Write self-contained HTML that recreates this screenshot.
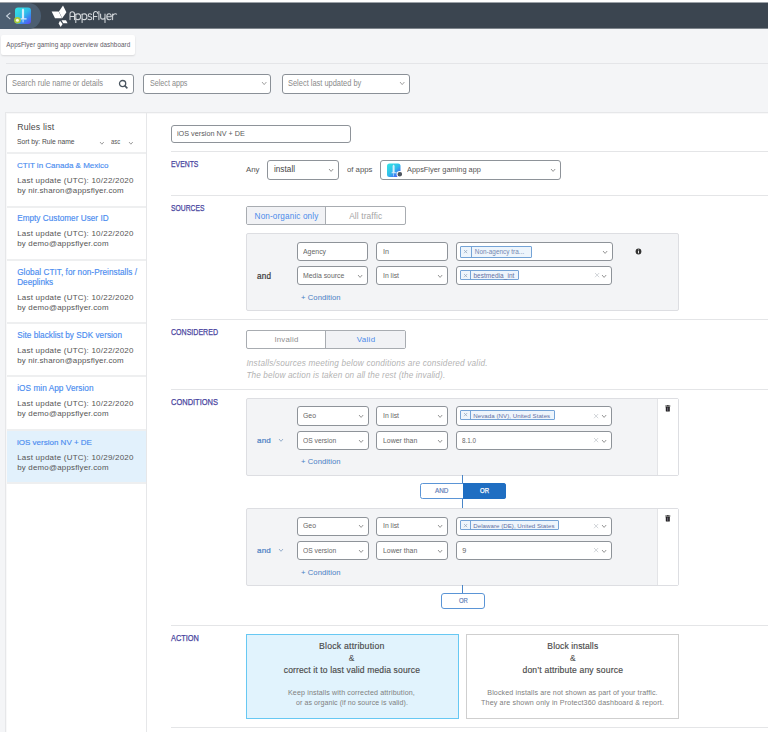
<!DOCTYPE html>
<html><head><meta charset="utf-8"><style>
html,body{margin:0;padding:0;}
body{width:768px;height:732px;overflow:hidden;position:relative;background:#f4f5f7;font-family:"Liberation Sans", sans-serif;}
.a{position:absolute;}
.t{position:absolute;white-space:pre;font-family:"Liberation Sans", sans-serif;}
</style></head><body>

<div class="a" style="left:0px;top:0px;width:768px;height:2px;background:#ffffff;"></div>
<div class="a" style="left:0px;top:2px;width:768px;height:1px;background:#9ca2a8;"></div>
<div class="a" style="left:0px;top:3px;width:768px;height:25px;background:#3b4550;"></div>
<div class="a" style="left:0px;top:28px;width:768px;height:1px;background:#7d848b;"></div>
<div class="a" style="left:0px;top:3px;width:41px;height:25.5px;background:#4c5e71;border-radius:0 12.75px 12.75px 0;"></div>
<svg class="a" style="left:5px;top:12px" width="7" height="8"><path d="M5.3 0.8 L1.6 4 L5.3 7.2" fill="none" stroke="#c9d3de" stroke-width="1.1"/></svg>
<svg class="a" style="left:13px;top:7px" width="20" height="18" viewBox="0 0 20 18">
<defs><linearGradient id="gi" x1="0.15" y1="0.1" x2="0.95" y2="1"><stop offset="0" stop-color="#33dce4"/><stop offset="0.42" stop-color="#30c0ea"/><stop offset="0.7" stop-color="#3a86f2"/><stop offset="1" stop-color="#5f48f0"/></linearGradient></defs>
<rect x="2" y="0.5" width="16" height="16.5" rx="3" fill="url(#gi)"/>
<path d="M10 1.2 L11.1 2.8 L11.1 11.3 L13.6 11.3 L13.6 12.4 L7.6 12.4 L7.6 11.3 L8.9 11.3 L8.9 2.8 Z" fill="#f2f6ff" fill-opacity="0.85"/>
<rect x="9.6" y="12.6" width="0.9" height="2.8" fill="#dfeaff"/>
<circle cx="4.4" cy="13.3" r="3.3" fill="#a6c83a"/>
<circle cx="4.4" cy="13.3" r="1.5" fill="#f5f9e8"/>
</svg>
<svg class="a" style="left:50px;top:5px" width="20" height="22" viewBox="0 0 20 22">
<polygon points="1.6,6.6 8.6,6.6 12,13.2 5,13.2" fill="#fff"/>
<polygon points="13,0.6 16.4,7.3 12.2,13.3 8.9,6.6" fill="#fff"/>
<polygon points="11.5,15.2 16,15.2 17.6,18.3 13.2,18.3" fill="#fff"/>
<polygon points="10,15.7 12.6,19 10.7,22 8.6,18.6" fill="#fff"/>
</svg>
<svg class="a" style="left:0;top:0" width="130" height="30"><g fill="none" stroke="#d3d7db" stroke-width="1.05" stroke-linecap="round">
<path d="M70 19.6 V14 A2.25 2.25 0 0 1 74.5 14 V19.6 M70 16.4 H74.5"/>
<path d="M75.8 13.9 V22.4"/><path d="M75.8 14.6 Q76.6 13.8 78.2 13.8 Q80.6 13.9 80.6 16.7 Q80.6 19.6 78.2 19.6 Q76.6 19.6 75.8 18.8"/>
<path d="M82.1 13.9 V22.4"/><path d="M82.1 14.6 Q82.9 13.8 84.5 13.8 Q86.9 13.9 86.9 16.7 Q86.9 19.6 84.5 19.6 Q82.9 19.6 82.1 18.8"/>
<path d="M91.6 14.4 Q90.9 13.8 89.8 13.8 Q88.2 13.8 88.2 15.2 Q88.2 16.5 89.9 16.7 Q91.8 16.9 91.8 18.3 Q91.8 19.7 89.9 19.7 Q88.6 19.7 88 19.1"/>
<path d="M93.5 19.6 V13.9 A2.2 2.2 0 0 1 97.9 13.6 M93.5 16.4 H96.9"/>
<path d="M98.9 11.6 V19.6"/>
<path d="M100.6 13.9 V16.9 A2.2 2.2 0 0 0 105 16.9 M105 13.9 V22.4"/>
<path d="M106.9 16.8 H111.3 Q111.3 13.8 109.1 13.8 Q106.8 13.8 106.8 16.7 Q106.8 19.7 109.2 19.7 Q110.5 19.7 111.1 19"/>
<path d="M112.6 19.6 V13.9 M112.6 15.9 Q113.3 13.8 115.4 13.8 Q116.2 13.8 116.6 14.1"/>
</g></svg>
<div class="a" style="left:1px;top:35px;width:134px;height:20px;background:#fff;border-radius:2px;box-shadow:0 1px 2px rgba(0,0,0,0.12);"></div>
<div class="t" style="left:6.30px;top:42.00px;font-size:6.300px;line-height:6.300px;color:#5e5a66;letter-spacing:0.075px;">AppsFlyer gaming app overview dashboard</div>
<div class="a" style="left:6px;top:63px;width:762px;height:1px;background:#e4e5e8;"></div>
<div class="a" style="left:6px;top:74px;width:128px;height:20px;background:#fff;border:1px solid #8a9097;border-radius:3px;box-sizing:border-box;"></div>
<div class="t" style="left:11.70px;top:80.00px;font-size:8.230px;line-height:8.230px;color:#8a8a8a;transform:scaleX(0.9061);transform-origin:0 0;">Search rule name or details</div>
<svg class="a" style="left:118px;top:79px" width="11" height="11"><circle cx="4.6" cy="4.6" r="3.1" fill="none" stroke="#4a5560" stroke-width="1.3"/><path d="M6.9 6.9 L9.4 9.4" stroke="#4a5560" stroke-width="1.5"/></svg>
<div class="a" style="left:143px;top:74px;width:128px;height:20px;background:#fff;border:1px solid #8a9097;border-radius:3px;box-sizing:border-box;"></div>
<div class="t" style="left:150.30px;top:80.00px;font-size:8.230px;line-height:8.230px;color:#8a8a8a;transform:scaleX(0.8719);transform-origin:0 0;">Select apps</div>
<svg class="a" style="left:260.8px;top:81.0px" width="6.4" height="4.6"><path d="M1 1 L3.2 3.6 L5.4 1" fill="none" stroke="#8a8a8a" stroke-width="0.8"/></svg>
<div class="a" style="left:282px;top:74px;width:128px;height:20px;background:#fff;border:1px solid #8a9097;border-radius:3px;box-sizing:border-box;"></div>
<div class="t" style="left:288.20px;top:80.00px;font-size:8.230px;line-height:8.230px;color:#8a8a8a;transform:scaleX(0.9063);transform-origin:0 0;">Select last updated by</div>
<svg class="a" style="left:399.3px;top:81.0px" width="6.4" height="4.6"><path d="M1 1 L3.2 3.6 L5.4 1" fill="none" stroke="#8a8a8a" stroke-width="0.8"/></svg>
<div class="a" style="left:5px;top:112px;width:763px;height:620px;background:#fff;border-top:1px solid #e6e7e9;border-left:1px solid #e6e7e9;box-sizing:border-box;"></div>
<div class="a" style="left:6px;top:113px;width:762px;height:1px;background:#f8f8f9;"></div>
<div class="a" style="left:6px;top:113px;width:1px;height:619px;background:#f8f8f9;"></div>
<div class="a" style="left:146px;top:113px;width:1px;height:619px;background:#e6e7e9;"></div>
<div class="t" style="left:17.20px;top:123.00px;font-size:8.744px;line-height:8.744px;color:#4a4a4a;letter-spacing:0.170px;">Rules list</div>
<div class="t" style="left:17.20px;top:139.00px;font-size:6.859px;line-height:6.859px;color:#4a4a4a;transform:scaleX(0.9811);transform-origin:0 0;">Sort by: Rule name</div>
<svg class="a" style="left:98.6px;top:140.5px" width="5.8" height="4.2"><path d="M1 1 L2.9 3.2 L4.8 1" fill="none" stroke="#777" stroke-width="0.7"/></svg>
<div class="t" style="left:111.40px;top:139.00px;font-size:6.722px;line-height:6.722px;color:#555;transform:scaleX(0.8699);transform-origin:0 0;">asc</div>
<svg class="a" style="left:127.9px;top:140.5px" width="5.8" height="4.2"><path d="M1 1 L2.9 3.2 L4.8 1" fill="none" stroke="#777" stroke-width="0.7"/></svg>
<div class="t" style="left:17.20px;top:162.00px;font-size:8.093px;line-height:8.093px;color:#4a8cf0;transform:scaleX(0.9912);transform-origin:0 0;-webkit-text-stroke:0.15px #4a8cf0;">CTIT in Canada &amp; Mexico</div>
<div class="t" style="left:17.20px;top:177.00px;font-size:7.990px;line-height:7.990px;color:#555;letter-spacing:0.219px;">Last update (UTC): 10/22/2020</div>
<div class="t" style="left:17.20px;top:187.00px;font-size:7.901px;line-height:7.901px;color:#555;letter-spacing:0.177px;">by nir.sharon@appsflyer.com</div>
<div class="t" style="left:17.20px;top:215.00px;font-size:8.163px;line-height:8.163px;color:#4a8cf0;letter-spacing:0.037px;-webkit-text-stroke:0.15px #4a8cf0;">Empty Customer User ID</div>
<div class="t" style="left:17.20px;top:230.00px;font-size:7.990px;line-height:7.990px;color:#555;letter-spacing:0.219px;">Last update (UTC): 10/22/2020</div>
<div class="t" style="left:17.20px;top:240.00px;font-size:7.924px;line-height:7.924px;color:#555;letter-spacing:0.209px;">by demo@appsflyer.com</div>
<div class="t" style="left:17.20px;top:269.00px;font-size:8.199px;line-height:8.199px;color:#4a8cf0;letter-spacing:0.046px;-webkit-text-stroke:0.15px #4a8cf0;">Global CTIT, for non-Preinstalls /</div>
<div class="t" style="left:17.20px;top:279.00px;font-size:8.200px;line-height:8.200px;color:#4a8cf0;-webkit-text-stroke:0.15px #4a8cf0;">Deeplinks</div>
<div class="t" style="left:17.20px;top:294.00px;font-size:7.990px;line-height:7.990px;color:#555;letter-spacing:0.219px;">Last update (UTC): 10/22/2020</div>
<div class="t" style="left:17.20px;top:304.00px;font-size:7.924px;line-height:7.924px;color:#555;letter-spacing:0.209px;">by demo@appsflyer.com</div>
<div class="t" style="left:17.20px;top:332.00px;font-size:8.168px;line-height:8.168px;color:#4a8cf0;letter-spacing:0.034px;-webkit-text-stroke:0.15px #4a8cf0;">Site blacklist by SDK version</div>
<div class="t" style="left:17.20px;top:347.00px;font-size:7.990px;line-height:7.990px;color:#555;letter-spacing:0.219px;">Last update (UTC): 10/22/2020</div>
<div class="t" style="left:17.20px;top:357.00px;font-size:7.901px;line-height:7.901px;color:#555;letter-spacing:0.177px;">by nir.sharon@appsflyer.com</div>
<div class="t" style="left:17.20px;top:385.00px;font-size:8.217px;line-height:8.217px;color:#4a8cf0;letter-spacing:0.063px;-webkit-text-stroke:0.15px #4a8cf0;">iOS min App Version</div>
<div class="t" style="left:17.20px;top:400.00px;font-size:7.990px;line-height:7.990px;color:#555;letter-spacing:0.219px;">Last update (UTC): 10/22/2020</div>
<div class="t" style="left:17.20px;top:410.00px;font-size:7.924px;line-height:7.924px;color:#555;letter-spacing:0.209px;">by demo@appsflyer.com</div>
<div class="a" style="left:7px;top:430.4px;width:139px;height:52.700000000000045px;background:#e2f1fc;"></div>
<div class="t" style="left:17.20px;top:439.00px;font-size:8.093px;line-height:8.093px;color:#4a8cf0;transform:scaleX(0.9909);transform-origin:0 0;-webkit-text-stroke:0.15px #4a8cf0;">iOS version NV + DE</div>
<div class="t" style="left:17.20px;top:454.00px;font-size:7.990px;line-height:7.990px;color:#555;letter-spacing:0.219px;">Last update (UTC): 10/29/2020</div>
<div class="t" style="left:17.20px;top:464.00px;font-size:7.924px;line-height:7.924px;color:#555;letter-spacing:0.209px;">by demo@appsflyer.com</div>
<div class="a" style="left:7px;top:152.3px;width:139px;height:2px;background:#eeeff0;"></div>
<div class="a" style="left:7px;top:205.5px;width:139px;height:2px;background:#eeeff0;"></div>
<div class="a" style="left:7px;top:259.4px;width:139px;height:2px;background:#eeeff0;"></div>
<div class="a" style="left:7px;top:322.3px;width:139px;height:2px;background:#eeeff0;"></div>
<div class="a" style="left:7px;top:375px;width:139px;height:2px;background:#eeeff0;"></div>
<div class="a" style="left:7px;top:429.4px;width:139px;height:2px;background:#eeeff0;"></div>
<div class="a" style="left:7px;top:482.1px;width:139px;height:2px;background:#eeeff0;"></div>
<div class="a" style="left:171px;top:124.5px;width:180px;height:18.5px;background:#fff;border:1px solid #8e9399;border-radius:3px;box-sizing:border-box;"></div>
<div class="t" style="left:177.00px;top:130.00px;font-size:8.093px;line-height:8.093px;color:#5a5a5a;transform:scaleX(0.8972);transform-origin:0 0;">iOS version NV + DE</div>
<div class="a" style="left:171px;top:151.0px;width:597px;height:1px;background:#e4e5e7;"></div>
<div class="t" style="left:171.00px;top:160.00px;font-size:8.505px;line-height:8.505px;color:#4a46a0;transform:scaleX(0.8052);transform-origin:0 0;-webkit-text-stroke:0.25px #4a46a0;">EVENTS</div>
<div class="t" style="left:246.00px;top:166.00px;font-size:7.826px;line-height:7.826px;color:#555;letter-spacing:0.006px;">Any</div>
<div class="a" style="left:267px;top:160px;width:72px;height:19.6px;background:#fff;border:1px solid #8e9399;border-radius:3px;box-sizing:border-box;"></div>
<svg class="a" style="left:327.9px;top:167.90000000000003px" width="6.2" height="4.4"><path d="M1 1 L3.1 3.4 L5.2 1" fill="none" stroke="#7a7a7a" stroke-width="0.8"/></svg>
<div class="t" style="left:273.90px;top:166.00px;font-size:8.193px;line-height:8.193px;color:#444;letter-spacing:0.042px;">install</div>
<div class="t" style="left:347.00px;top:166.00px;font-size:7.819px;line-height:7.819px;color:#555;transform:scaleX(0.9942);transform-origin:0 0;">of apps</div>
<div class="a" style="left:380px;top:160px;width:181px;height:19.6px;background:#fff;border:1px solid #8e9399;border-radius:3px;box-sizing:border-box;"></div>
<svg class="a" style="left:549.9px;top:167.90000000000003px" width="6.2" height="4.4"><path d="M1 1 L3.1 3.4 L5.2 1" fill="none" stroke="#7a7a7a" stroke-width="0.8"/></svg>
<svg class="a" style="left:385.5px;top:162.5px" width="16" height="15" viewBox="0 0 16 15">
<defs><linearGradient id="gi2" x1="0.15" y1="0.1" x2="0.95" y2="1"><stop offset="0" stop-color="#33dce4"/><stop offset="0.42" stop-color="#30c0ea"/><stop offset="0.7" stop-color="#3a86f2"/><stop offset="1" stop-color="#5f48f0"/></linearGradient></defs>
<rect x="1" y="0.5" width="13.5" height="13.5" rx="2.5" fill="url(#gi2)"/>
<path d="M7.6 1.5 L8.6 2.8 L8.6 9.3 L10.6 9.3 L10.6 10.3 L5.6 10.3 L5.6 9.3 L6.6 9.3 L6.6 2.8 Z" fill="#f2f6ff" fill-opacity="0.85"/>
<rect x="7.2" y="10.3" width="0.8" height="3" fill="#e8f0ff" fill-opacity="0.7"/>
<circle cx="13.8" cy="11.2" r="3.2" fill="#fff"/><circle cx="13.8" cy="11.2" r="2.3" fill="#4e5660"/>
</svg>
<div class="t" style="left:406.50px;top:166.00px;font-size:7.682px;line-height:7.682px;color:#555;transform:scaleX(0.9628);transform-origin:0 0;">AppsFlyer gaming app</div>
<div class="a" style="left:171px;top:195.0px;width:597px;height:1px;background:#e4e5e7;"></div>
<div class="t" style="left:171.00px;top:204.00px;font-size:8.505px;line-height:8.505px;color:#4a46a0;transform:scaleX(0.7941);transform-origin:0 0;-webkit-text-stroke:0.25px #4a46a0;">SOURCES</div>
<div class="a" style="left:246px;top:206.3px;width:159.5px;height:19px;background:#fff;border:1px solid #a8acb1;border-radius:2px;box-sizing:border-box;"></div>
<div class="a" style="left:247px;top:207.3px;width:78px;height:17px;background:#f1f2f5;"></div>
<div class="a" style="left:325px;top:206.3px;width:1px;height:19px;background:#a8acb1;"></div>
<div class="t" style="left:254.60px;top:213.00px;font-size:8.198px;line-height:8.198px;color:#4b8bea;letter-spacing:0.122px;">Non-organic only</div>
<div class="t" style="left:349.20px;top:212.00px;font-size:8.315px;line-height:8.315px;color:#a3a3a3;letter-spacing:0.137px;">All traffic</div>
<div class="a" style="left:246px;top:233.3px;width:433.3px;height:78px;background:#f3f4f6;border:1px solid #dddee2;border-radius:2px;box-sizing:border-box;"></div>
<div class="a" style="left:296.8px;top:242px;width:71.7px;height:18.8px;background:#fff;border:1px solid #8e9399;border-radius:3px;box-sizing:border-box;"></div>
<div class="t" style="left:302.90px;top:249.00px;font-size:7.133px;line-height:7.133px;color:#666666;transform:scaleX(0.9709);transform-origin:0 0;">Agency</div>
<div class="a" style="left:376.3px;top:242px;width:71.6px;height:18.8px;background:#fff;border:1px solid #8e9399;border-radius:3px;box-sizing:border-box;"></div>
<div class="t" style="left:382.60px;top:248.00px;font-size:7.270px;line-height:7.270px;color:#666666;transform:scaleX(0.9895);transform-origin:0 0;">In</div>
<div class="a" style="left:456.3px;top:242.2px;width:156.9px;height:18.9px;background:#fff;border:1px solid #8e9399;border-radius:3px;box-sizing:border-box;"></div>
<svg class="a" style="left:602.1px;top:249.75px" width="6.2" height="4.4"><path d="M1 1 L3.1 3.4 L5.2 1" fill="none" stroke="#7a7a7a" stroke-width="0.8"/></svg>
<div class="a" style="left:459.7px;top:245.7px;width:72.1px;height:12px;background:#eef5fc;border:1px solid #74a3d6;border-radius:1px;box-sizing:border-box;"></div>
<div class="a" style="left:471px;top:245.7px;width:1px;height:12px;background:#74a3d6;"></div>
<svg class="a" style="left:463.25px;top:249.1px" width="5.2" height="5.2"><path d="M1 1 L4.2 4.2 M4.2 1 L1 4.2" fill="none" stroke="#8ea2b8" stroke-width="0.7"/></svg>
<div class="t" style="left:474.80px;top:249.00px;font-size:6.382px;line-height:6.382px;color:#7488b0;letter-spacing:0.034px;">Non-agency tra...</div>
<svg class="a" style="left:635px;top:248px" width="7" height="7"><circle cx="3.5" cy="3.5" r="2.9" fill="#333"/><rect x="3.05" y="3" width="0.9" height="2.3" fill="#fff"/><rect x="3.05" y="1.6" width="0.9" height="0.8" fill="#fff"/></svg>
<div class="t" style="left:257.00px;top:273.00px;font-size:8.173px;line-height:8.173px;color:#3a3a3a;letter-spacing:0.181px;-webkit-text-stroke:0.2px #3a3a3a;">and</div>
<div class="a" style="left:296.8px;top:266.4px;width:71.7px;height:18.6px;background:#fff;border:1px solid #8e9399;border-radius:3px;box-sizing:border-box;"></div>
<svg class="a" style="left:357.4px;top:273.8px" width="6.2" height="4.4"><path d="M1 1 L3.1 3.4 L5.2 1" fill="none" stroke="#7a7a7a" stroke-width="0.8"/></svg>
<div class="t" style="left:302.90px;top:272.00px;font-size:7.407px;line-height:7.407px;color:#666666;transform:scaleX(0.9310);transform-origin:0 0;">Media source</div>
<div class="a" style="left:376.3px;top:266.4px;width:71.6px;height:18.6px;background:#fff;border:1px solid #8e9399;border-radius:3px;box-sizing:border-box;"></div>
<svg class="a" style="left:436.79999999999995px;top:273.8px" width="6.2" height="4.4"><path d="M1 1 L3.1 3.4 L5.2 1" fill="none" stroke="#7a7a7a" stroke-width="0.8"/></svg>
<div class="t" style="left:382.60px;top:272.00px;font-size:7.270px;line-height:7.270px;color:#666666;transform:scaleX(0.9429);transform-origin:0 0;">In list</div>
<div class="a" style="left:456.3px;top:266.4px;width:155.9px;height:18.6px;background:#fff;border:1px solid #8e9399;border-radius:3px;box-sizing:border-box;"></div>
<svg class="a" style="left:601.1px;top:273.8px" width="6.2" height="4.4"><path d="M1 1 L3.1 3.4 L5.2 1" fill="none" stroke="#7a7a7a" stroke-width="0.8"/></svg>
<svg class="a" style="left:593.5px;top:272.29999999999995px" width="6.2" height="6.2"><path d="M1 1 L5.2 5.2 M5.2 1 L1 5.2" fill="none" stroke="#c3c7cc" stroke-width="0.75"/></svg>
<div class="a" style="left:459.6px;top:270.2px;width:59px;height:10px;background:#eef5fc;border:1px solid #74a3d6;border-radius:1px;box-sizing:border-box;"></div>
<div class="a" style="left:470.4px;top:270.2px;width:1px;height:10px;background:#74a3d6;"></div>
<svg class="a" style="left:462.9px;top:272.59999999999997px" width="5.2" height="5.2"><path d="M1 1 L4.2 4.2 M4.2 1 L1 4.2" fill="none" stroke="#8ea2b8" stroke-width="0.7"/></svg>
<div class="t" style="left:473.40px;top:273.00px;font-size:6.456px;line-height:6.456px;color:#5f70a3;letter-spacing:0.076px;">bestmedia_int</div>
<div class="t" style="left:301.00px;top:294.00px;font-size:7.665px;line-height:7.665px;color:#4a80c4;letter-spacing:0.061px;">+ Condition</div>
<div class="a" style="left:171px;top:318.9px;width:597px;height:1px;background:#e4e5e7;"></div>
<div class="t" style="left:171.00px;top:328.00px;font-size:8.505px;line-height:8.505px;color:#4a46a0;transform:scaleX(0.8288);transform-origin:0 0;-webkit-text-stroke:0.25px #4a46a0;">CONSIDERED</div>
<div class="a" style="left:246px;top:330.4px;width:159.8px;height:18.3px;background:#fff;border:1px solid #a8acb1;border-radius:2px;box-sizing:border-box;"></div>
<div class="a" style="left:325.6px;top:331.4px;width:79.2px;height:16.3px;background:#f1f2f5;"></div>
<div class="a" style="left:325.1px;top:330.4px;width:1px;height:18.3px;background:#a8acb1;"></div>
<div class="t" style="left:274.40px;top:336.00px;font-size:7.838px;line-height:7.838px;color:#8f8f8f;letter-spacing:0.207px;">Invalid</div>
<div class="t" style="left:356.80px;top:336.00px;font-size:7.960px;line-height:7.960px;color:#4b8bea;letter-spacing:0.297px;">Valid</div>
<div class="t" style="left:246.40px;top:360.00px;font-size:8.239px;line-height:8.239px;color:#b3b3b3;letter-spacing:0.189px;font-style:italic;">Installs/sources meeting below conditions are considered valid.</div>
<div class="t" style="left:246.40px;top:372.00px;font-size:8.182px;line-height:8.182px;color:#b3b3b3;letter-spacing:0.154px;font-style:italic;">The below action is taken on all the rest (the invalid).</div>
<div class="a" style="left:171px;top:388.8px;width:597px;height:1px;background:#e4e5e7;"></div>
<div class="t" style="left:171.00px;top:398.00px;font-size:8.505px;line-height:8.505px;color:#4a46a0;transform:scaleX(0.8803);transform-origin:0 0;-webkit-text-stroke:0.25px #4a46a0;">CONDITIONS</div>
<div class="a" style="left:246px;top:398px;width:433px;height:77.5px;background:#f3f4f6;border:1px solid #dddee2;border-radius:2px;box-sizing:border-box;"></div>
<div class="a" style="left:657px;top:399px;width:21px;height:75.5px;background:#fff;border-left:1px solid #e3e4e7;box-sizing:border-box;"></div>
<svg class="a" style="left:664px;top:405px" width="8" height="8"><rect x="1.3" y="0.5" width="5" height="1" fill="#222"/><rect x="3" y="0" width="1.6" height="0.7" fill="#222"/><rect x="1.8" y="1.7" width="4" height="4.9" rx="0.5" fill="#222"/><rect x="3.45" y="2.5" width="0.7" height="3.3" fill="#9a8fb0"/></svg>
<div class="a" style="left:297px;top:406.3px;width:71.6px;height:19.5px;background:#fff;border:1px solid #8e9399;border-radius:3px;box-sizing:border-box;"></div>
<svg class="a" style="left:357.5px;top:414.15000000000003px" width="6.2" height="4.4"><path d="M1 1 L3.1 3.4 L5.2 1" fill="none" stroke="#7a7a7a" stroke-width="0.8"/></svg>
<div class="t" style="left:302.80px;top:412.00px;font-size:7.270px;line-height:7.270px;color:#666666;transform:scaleX(0.9460);transform-origin:0 0;">Geo</div>
<div class="a" style="left:376.3px;top:406.3px;width:71.5px;height:19.5px;background:#fff;border:1px solid #8e9399;border-radius:3px;box-sizing:border-box;"></div>
<svg class="a" style="left:436.7px;top:414.15000000000003px" width="6.2" height="4.4"><path d="M1 1 L3.1 3.4 L5.2 1" fill="none" stroke="#7a7a7a" stroke-width="0.8"/></svg>
<div class="t" style="left:382.50px;top:412.00px;font-size:7.270px;line-height:7.270px;color:#666666;transform:scaleX(0.9429);transform-origin:0 0;">In list</div>
<div class="a" style="left:456px;top:406.3px;width:155.7px;height:19.5px;background:#fff;border:1px solid #8e9399;border-radius:3px;box-sizing:border-box;"></div>
<svg class="a" style="left:600.6px;top:414.15000000000003px" width="6.2" height="4.4"><path d="M1 1 L3.1 3.4 L5.2 1" fill="none" stroke="#7a7a7a" stroke-width="0.8"/></svg>
<svg class="a" style="left:593.0px;top:412.65px" width="6.2" height="6.2"><path d="M1 1 L5.2 5.2 M5.2 1 L1 5.2" fill="none" stroke="#c3c7cc" stroke-width="0.75"/></svg>
<div class="a" style="left:459.6px;top:409.7px;width:95px;height:10.4px;background:#eef5fc;border:1px solid #74a3d6;border-radius:1px;box-sizing:border-box;"></div>
<div class="a" style="left:470px;top:409.7px;width:1px;height:10.4px;background:#74a3d6;"></div>
<svg class="a" style="left:462.7px;top:412.29999999999995px" width="5.2" height="5.2"><path d="M1 1 L4.2 4.2 M4.2 1 L1 4.2" fill="none" stroke="#8ea2b8" stroke-width="0.7"/></svg>
<div class="t" style="left:473.30px;top:413.00px;font-size:6.138px;line-height:6.138px;color:#5f70a3;letter-spacing:0.051px;">Nevada (NV), United States</div>
<div class="t" style="left:257.00px;top:437.00px;font-size:8.045px;line-height:8.045px;color:#4a80c4;letter-spacing:0.188px;-webkit-text-stroke:0.2px #4a80c4;">and</div>
<svg class="a" style="left:278.0px;top:438.05000000000007px" width="6" height="4.3"><path d="M1 1 L3.0 3.3 L5 1" fill="none" stroke="#7d9cc0" stroke-width="0.8"/></svg>
<div class="a" style="left:297px;top:431.1px;width:71.6px;height:18.8px;background:#fff;border:1px solid #8e9399;border-radius:3px;box-sizing:border-box;"></div>
<svg class="a" style="left:357.5px;top:438.6px" width="6.2" height="4.4"><path d="M1 1 L3.1 3.4 L5.2 1" fill="none" stroke="#7a7a7a" stroke-width="0.8"/></svg>
<div class="t" style="left:302.80px;top:437.00px;font-size:7.270px;line-height:7.270px;color:#666666;transform:scaleX(0.9232);transform-origin:0 0;">OS version</div>
<div class="a" style="left:376.3px;top:431.1px;width:71.5px;height:18.8px;background:#fff;border:1px solid #8e9399;border-radius:3px;box-sizing:border-box;"></div>
<svg class="a" style="left:436.7px;top:438.6px" width="6.2" height="4.4"><path d="M1 1 L3.1 3.4 L5.2 1" fill="none" stroke="#7a7a7a" stroke-width="0.8"/></svg>
<div class="t" style="left:382.50px;top:437.00px;font-size:7.270px;line-height:7.270px;color:#666666;transform:scaleX(0.9535);transform-origin:0 0;">Lower than</div>
<div class="a" style="left:456px;top:431.1px;width:155.7px;height:18.8px;background:#fff;border:1px solid #8e9399;border-radius:3px;box-sizing:border-box;"></div>
<svg class="a" style="left:600.6px;top:438.6px" width="6.2" height="4.4"><path d="M1 1 L3.1 3.4 L5.2 1" fill="none" stroke="#7a7a7a" stroke-width="0.8"/></svg>
<svg class="a" style="left:593.0px;top:437.09999999999997px" width="6.2" height="6.2"><path d="M1 1 L5.2 5.2 M5.2 1 L1 5.2" fill="none" stroke="#c3c7cc" stroke-width="0.75"/></svg>
<div class="t" style="left:462.30px;top:437.00px;font-size:7.270px;line-height:7.270px;color:#666666;transform:scaleX(0.8658);transform-origin:0 0;">8.1.0</div>
<div class="t" style="left:301.00px;top:458.00px;font-size:7.665px;line-height:7.665px;color:#4a80c4;letter-spacing:0.061px;">+ Condition</div>
<div class="a" style="left:462.2px;top:475.4px;width:1px;height:33px;background:#4a86c8;"></div>
<div class="a" style="left:420px;top:483.2px;width:85.6px;height:15.5px;background:#fff;border:1px solid #5b95d6;border-radius:2.5px;box-sizing:border-box;"></div>
<div class="a" style="left:462.6px;top:483.2px;width:43px;height:15.5px;background:#1f6ec2;border-radius:0 2.5px 2.5px 0;"></div>
<div class="t" style="left:435.00px;top:488.00px;font-size:6.859px;line-height:6.859px;color:#5f80b8;transform:scaleX(0.9253);transform-origin:0 0;-webkit-text-stroke:0.2px #5f80b8;">AND</div>
<div class="t" style="left:479.80px;top:488.00px;font-size:6.859px;line-height:6.859px;color:#ffffff;transform:scaleX(0.8748);transform-origin:0 0;-webkit-text-stroke:0.25px #ffffff;">OR</div>
<div class="a" style="left:246px;top:508.2px;width:433px;height:77.5px;background:#f3f4f6;border:1px solid #dddee2;border-radius:2px;box-sizing:border-box;"></div>
<div class="a" style="left:657px;top:509.2px;width:21px;height:75.5px;background:#fff;border-left:1px solid #e3e4e7;box-sizing:border-box;"></div>
<svg class="a" style="left:664px;top:515.2px" width="8" height="8"><rect x="1.3" y="0.5" width="5" height="1" fill="#222"/><rect x="3" y="0" width="1.6" height="0.7" fill="#222"/><rect x="1.8" y="1.7" width="4" height="4.9" rx="0.5" fill="#222"/><rect x="3.45" y="2.5" width="0.7" height="3.3" fill="#9a8fb0"/></svg>
<div class="a" style="left:297px;top:516.5px;width:71.6px;height:19.5px;background:#fff;border:1px solid #8e9399;border-radius:3px;box-sizing:border-box;"></div>
<svg class="a" style="left:357.5px;top:524.3499999999999px" width="6.2" height="4.4"><path d="M1 1 L3.1 3.4 L5.2 1" fill="none" stroke="#7a7a7a" stroke-width="0.8"/></svg>
<div class="t" style="left:302.80px;top:522.00px;font-size:7.270px;line-height:7.270px;color:#666666;transform:scaleX(0.9460);transform-origin:0 0;">Geo</div>
<div class="a" style="left:376.3px;top:516.5px;width:71.5px;height:19.5px;background:#fff;border:1px solid #8e9399;border-radius:3px;box-sizing:border-box;"></div>
<svg class="a" style="left:436.7px;top:524.3499999999999px" width="6.2" height="4.4"><path d="M1 1 L3.1 3.4 L5.2 1" fill="none" stroke="#7a7a7a" stroke-width="0.8"/></svg>
<div class="t" style="left:382.50px;top:522.00px;font-size:7.270px;line-height:7.270px;color:#666666;transform:scaleX(0.9429);transform-origin:0 0;">In list</div>
<div class="a" style="left:456px;top:516.5px;width:155.7px;height:19.5px;background:#fff;border:1px solid #8e9399;border-radius:3px;box-sizing:border-box;"></div>
<svg class="a" style="left:600.6px;top:524.3499999999999px" width="6.2" height="4.4"><path d="M1 1 L3.1 3.4 L5.2 1" fill="none" stroke="#7a7a7a" stroke-width="0.8"/></svg>
<svg class="a" style="left:593.0px;top:522.85px" width="6.2" height="6.2"><path d="M1 1 L5.2 5.2 M5.2 1 L1 5.2" fill="none" stroke="#c3c7cc" stroke-width="0.75"/></svg>
<div class="a" style="left:459.6px;top:519.9px;width:99.7px;height:10.4px;background:#eef5fc;border:1px solid #74a3d6;border-radius:1px;box-sizing:border-box;"></div>
<div class="a" style="left:470px;top:519.9px;width:1px;height:10.4px;background:#74a3d6;"></div>
<svg class="a" style="left:462.7px;top:522.5px" width="5.2" height="5.2"><path d="M1 1 L4.2 4.2 M4.2 1 L1 4.2" fill="none" stroke="#8ea2b8" stroke-width="0.7"/></svg>
<div class="t" style="left:473.30px;top:523.00px;font-size:6.117px;line-height:6.117px;color:#5f70a3;letter-spacing:0.040px;">Delaware (DE), United States</div>
<div class="t" style="left:257.00px;top:547.00px;font-size:8.045px;line-height:8.045px;color:#4a80c4;letter-spacing:0.188px;-webkit-text-stroke:0.2px #4a80c4;">and</div>
<svg class="a" style="left:278.0px;top:548.25px" width="6" height="4.3"><path d="M1 1 L3.0 3.3 L5 1" fill="none" stroke="#7d9cc0" stroke-width="0.8"/></svg>
<div class="a" style="left:297px;top:541.3px;width:71.6px;height:18.8px;background:#fff;border:1px solid #8e9399;border-radius:3px;box-sizing:border-box;"></div>
<svg class="a" style="left:357.5px;top:548.7999999999998px" width="6.2" height="4.4"><path d="M1 1 L3.1 3.4 L5.2 1" fill="none" stroke="#7a7a7a" stroke-width="0.8"/></svg>
<div class="t" style="left:302.80px;top:547.00px;font-size:7.270px;line-height:7.270px;color:#666666;transform:scaleX(0.9232);transform-origin:0 0;">OS version</div>
<div class="a" style="left:376.3px;top:541.3px;width:71.5px;height:18.8px;background:#fff;border:1px solid #8e9399;border-radius:3px;box-sizing:border-box;"></div>
<svg class="a" style="left:436.7px;top:548.7999999999998px" width="6.2" height="4.4"><path d="M1 1 L3.1 3.4 L5.2 1" fill="none" stroke="#7a7a7a" stroke-width="0.8"/></svg>
<div class="t" style="left:382.50px;top:547.00px;font-size:7.270px;line-height:7.270px;color:#666666;transform:scaleX(0.9535);transform-origin:0 0;">Lower than</div>
<div class="a" style="left:456px;top:541.3px;width:155.7px;height:18.8px;background:#fff;border:1px solid #8e9399;border-radius:3px;box-sizing:border-box;"></div>
<svg class="a" style="left:600.6px;top:548.7999999999998px" width="6.2" height="4.4"><path d="M1 1 L3.1 3.4 L5.2 1" fill="none" stroke="#7a7a7a" stroke-width="0.8"/></svg>
<svg class="a" style="left:593.0px;top:547.3px" width="6.2" height="6.2"><path d="M1 1 L5.2 5.2 M5.2 1 L1 5.2" fill="none" stroke="#c3c7cc" stroke-width="0.75"/></svg>
<div class="t" style="left:462.30px;top:547.00px;font-size:7.270px;line-height:7.270px;color:#666666;">9</div>
<div class="t" style="left:301.00px;top:569.00px;font-size:7.665px;line-height:7.665px;color:#4a80c4;letter-spacing:0.061px;">+ Condition</div>
<div class="a" style="left:462.2px;top:585.3px;width:1px;height:8.5px;background:#4a86c8;"></div>
<div class="a" style="left:441.1px;top:593.3px;width:43.7px;height:15.3px;background:#fff;border:1px solid #5b95d6;border-radius:3px;box-sizing:border-box;"></div>
<div class="t" style="left:458.50px;top:598.00px;font-size:6.859px;line-height:6.859px;color:#5f80b8;transform:scaleX(0.8651);transform-origin:0 0;-webkit-text-stroke:0.2px #5f80b8;">OR</div>
<div class="a" style="left:171px;top:625.1px;width:597px;height:1px;background:#e4e5e7;"></div>
<div class="t" style="left:171.00px;top:635.00px;font-size:8.230px;line-height:8.230px;color:#4a46a0;transform:scaleX(0.9005);transform-origin:0 0;-webkit-text-stroke:0.25px #4a46a0;">ACTION</div>
<div class="a" style="left:246px;top:634.1px;width:212.5px;height:84.8px;background:#e1f3fd;border:1px solid #67c8f3;box-sizing:border-box;"></div>
<div class="a" style="left:466.4px;top:634.2px;width:212.8px;height:84.5px;background:#fff;border:1px solid #cfcfcf;box-sizing:border-box;"></div>
<div class="t" style="left:319.00px;top:642.00px;font-size:8.711px;line-height:8.711px;color:#4a4a4a;letter-spacing:0.214px;-webkit-text-stroke:0.15px #4a4a4a;">Block attribution</div>
<div class="t" style="left:348.87px;top:654.00px;font-size:8.500px;line-height:8.500px;color:#4a4a4a;">&amp;</div>
<div class="t" style="left:283.75px;top:666.00px;font-size:8.542px;line-height:8.542px;color:#4a4a4a;letter-spacing:0.133px;-webkit-text-stroke:0.15px #4a4a4a;">correct it to last valid media source</div>
<div class="t" style="left:288.00px;top:690.00px;font-size:7.139px;line-height:7.139px;color:#808080;letter-spacing:0.120px;">Keep installs with corrected attribution,</div>
<div class="t" style="left:296.00px;top:699.00px;font-size:7.041px;line-height:7.041px;color:#808080;letter-spacing:0.076px;">or as organic (if no source is valid).</div>
<div class="t" style="left:547.35px;top:642.00px;font-size:8.518px;line-height:8.518px;color:#4a4a4a;letter-spacing:0.128px;-webkit-text-stroke:0.15px #4a4a4a;">Block installs</div>
<div class="t" style="left:569.97px;top:654.00px;font-size:8.500px;line-height:8.500px;color:#4a4a4a;">&amp;</div>
<div class="t" style="left:522.50px;top:666.00px;font-size:8.595px;line-height:8.595px;color:#4a4a4a;letter-spacing:0.164px;-webkit-text-stroke:0.15px #4a4a4a;">don&#8217;t attribute any source</div>
<div class="t" style="left:487.30px;top:690.00px;font-size:7.121px;line-height:7.121px;color:#808080;letter-spacing:0.112px;">Blocked installs are not shown as part of your traffic.</div>
<div class="t" style="left:481.00px;top:700.00px;font-size:7.162px;line-height:7.162px;color:#808080;letter-spacing:0.143px;">They are shown only in Protect360 dashboard &amp; report.</div>
<div class="a" style="left:171px;top:727.3px;width:597px;height:1px;background:#e4e5e7;"></div>
</body></html>
